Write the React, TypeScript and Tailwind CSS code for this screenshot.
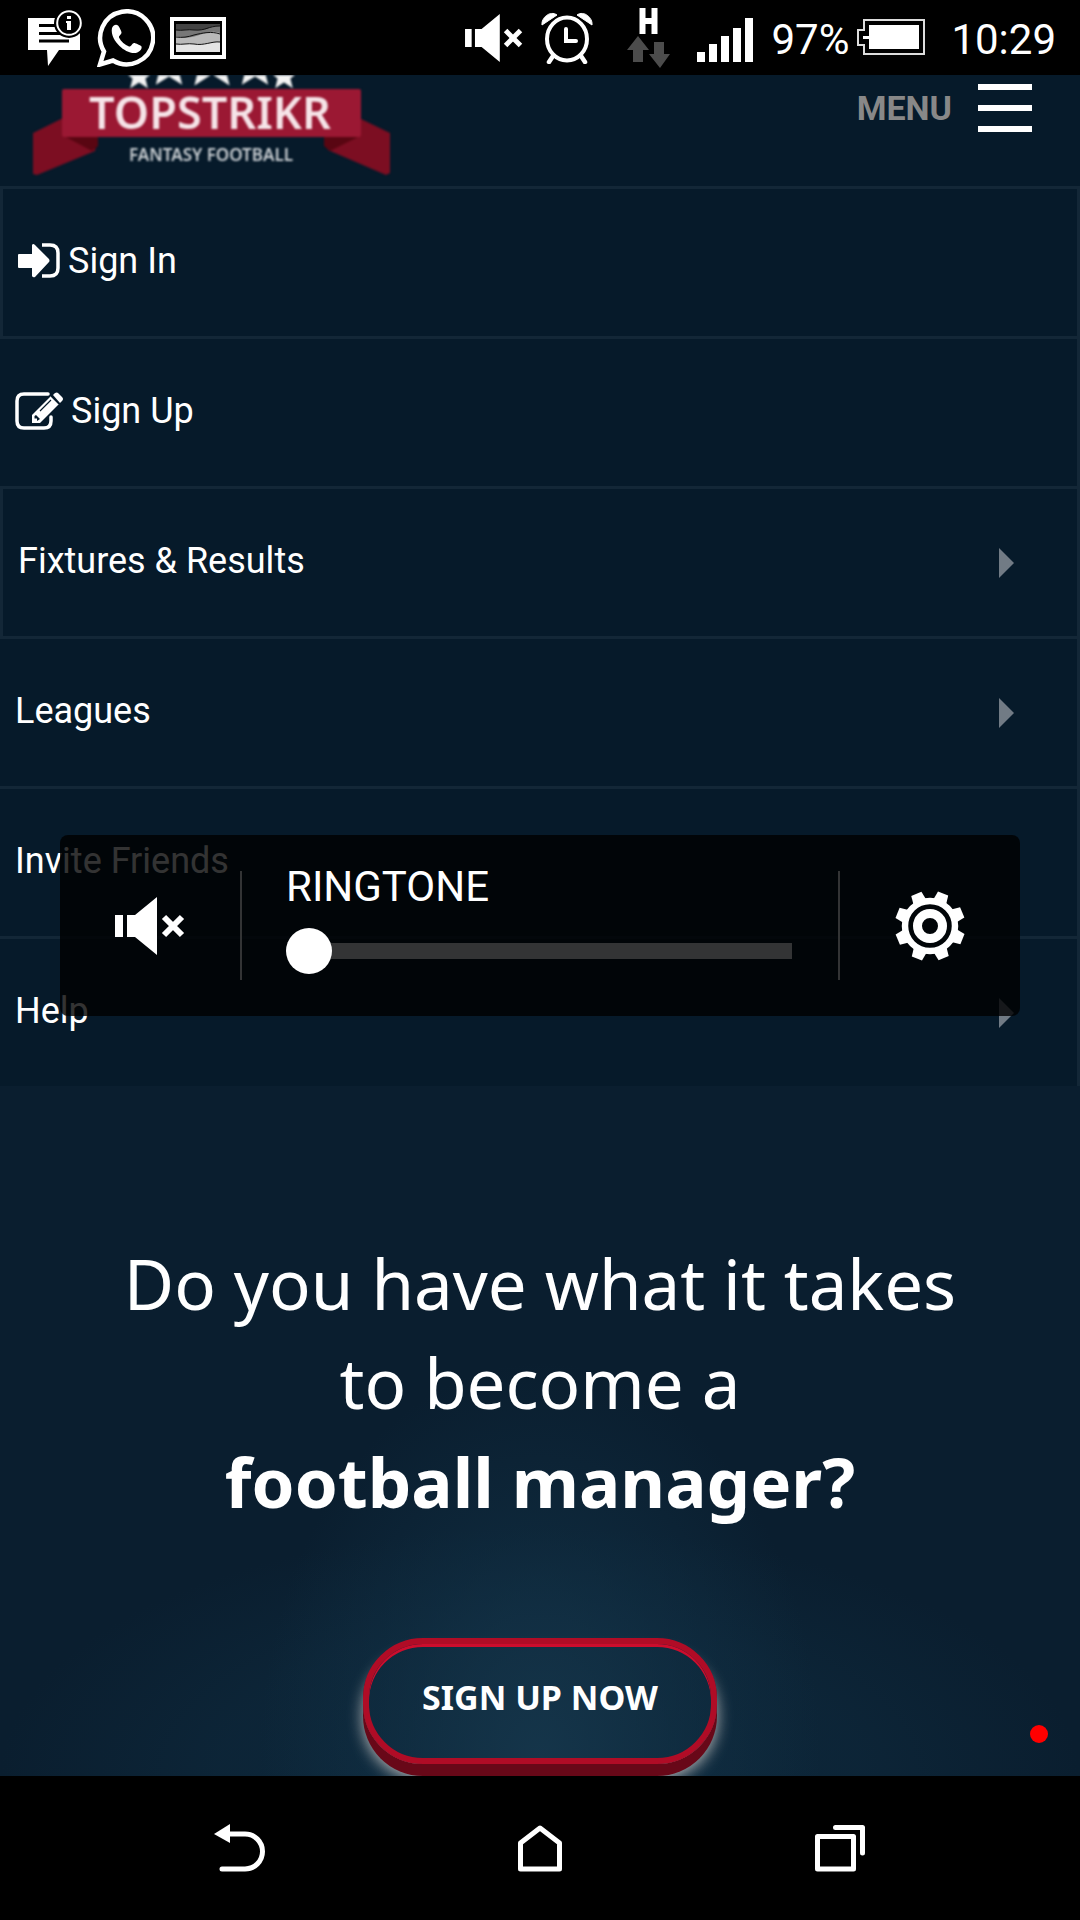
import React, { useState } from "react";

function MuteIcon({ className }: { className?: string }) {
  return (
    <svg viewBox="0 0 70 58" className={className} fill="currentColor" aria-hidden="true">
      <path d="M0 18h8v22H0zM12 18h8L42 0v58L20 40h-8z" />
      <path d="M49 20 67 38M67 20 49 38" stroke="currentColor" strokeWidth="6" fill="none" />
    </svg>
  );
}

function MessageIcon() {
  return (
    <svg viewBox="0 0 54 56" className="h-14 w-[54px]" aria-hidden="true">
      <path d="M0 8h52v32H31L20 56l-1-16H0z" fill="#fff" />
      <path d="M11 16h28M11 24h30M11 31.500h30" stroke="#000" strokeWidth="3" transform="translate(0 -.5)" />
      <circle cx="41" cy="13" r="15" fill="#000" />
      <circle cx="41" cy="13" r="11.800" fill="#000" stroke="#fff" strokeWidth="2" />
      <path d="M39 6h4v3h-4zM38 11h5v9h-4v-7h-1z" fill="#fff" />
    </svg>
  );
}

function ChatIcon() {
  return (
    <svg viewBox="0 0 58 58" className="h-[58px] w-[58px]" fill="none" aria-hidden="true">
      <path
        d="M3 55.500 7 42.500A26.500 26.500 0 1 1 16 51.500z"
        stroke="#fff"
        strokeWidth="4.500"
      />
      <path
        d="M15 19c1.500-3 4-4 6-2.500 1 .8 3.500 6 3.500 7 0 2-3 3.500-2.500 5 2 4 6 7.500 10 9 2 .5 3.500-3.500 5-3.500s7 2.500 7.500 3.500c1 3-3 6-6 6.500-5 .8-12-3-16-7-4-4-9-11-7.500-18z"
        fill="#fff"
      />
    </svg>
  );
}

function PictureIcon() {
  return (
    <svg viewBox="0 0 56 42" className="h-[42px] w-14" aria-hidden="true">
      <path d="M2 2h52v38H2z" fill="#000" stroke="#fff" strokeWidth="4" />
      <path d="M6 7h44v28H6z" fill="#e4e4e4" />
      <path d="M6 7h44v18c-8-1-16 4-26 2-6-1-12 1-18 0z" fill="#b9b9b9" />
      <path d="M6 7h44v9c-10-4-20 3-28 4-6 1-10 1-16-1z" fill="#777" />
      <path d="M6 7h44v2c-12-1-10 5-26 4-8-1-12 1-18 0z" fill="#444" />
      <path
        d="M6 27c6 1 12-1 18 0 10 2 18-3 26-2M6 20c6 1 12 0 18-2 8-2 18-4 26-1M6 13c6 1 12-1 18 0 12 1 14-4 26-4"
        stroke="#111"
        fill="none"
      />
    </svg>
  );
}

function AlarmIcon() {
  return (
    <svg viewBox="0 0 52 52" className="h-[52px] w-[52px]" fill="none" stroke="#fff" aria-hidden="true">
      <ellipse cx="26" cy="27" rx="20" ry="21.500" strokeWidth="4" />
      <path d="M25 17v12h10" strokeWidth="4" strokeLinecap="round" />
      <path d="m12 44-4 6M40 44l4 6" strokeWidth="4.500" strokeLinecap="round" />
      <path d="M1 13C0 6 9-2 16 3zM51 13C52 6 43-2 36 3z" fill="#fff" strokeWidth="1" />
    </svg>
  );
}

function DataIcon() {
  return (
    <svg viewBox="0 0 44 60" className="h-15 w-11" aria-hidden="true">
      <path d="M15.500 0v26M27.500 0v26M15 13h13" stroke="#fff" strokeWidth="6" />
      <path d="M11 28 22 42h-6v12H6V42H0zM27 34h10v12h6L33 60 22 46h5z" fill="#4c4c4c" />
    </svg>
  );
}

function SignalIcon() {
  return (
    <svg viewBox="0 0 56 44" className="h-11 w-14" fill="#fff" aria-hidden="true">
      <path d="M0 34h8v10H0zM12 26h8v18h-8zM24 18h8v26h-8zM36 10h8v34h-8zM48 0h8v44h-8z" />
    </svg>
  );
}

function BatteryIcon() {
  return (
    <svg viewBox="0 0 68 37" className="h-[37px] w-17" aria-hidden="true">
      <path d="M7 1h60v34H7v-9H1V11h6z" fill="none" stroke="#ddd" strokeWidth="2" />
      <path d="M12 6h50v24H12V20H6v-3h6z" fill="#fff" />
    </svg>
  );
}

function StatusBar() {
  return (
    <header className="flex h-[75px] items-center justify-between bg-black pl-7 pr-6 text-[42px] leading-none text-white">
      <div className="flex items-center gap-[15px]">
        <MessageIcon />
        <ChatIcon />
        <PictureIcon />
      </div>
      <div className="flex items-center gap-[18px]">
        <MuteIcon className="h-12 w-[58px]" />
        <AlarmIcon />
        <div className="pl-4 pr-2">
          <DataIcon />
        </div>
        <div className="pt-1">
          <SignalIcon />
        </div>
        <div className="flex items-center gap-2">
          <span className="pt-1">97%</span>
          <BatteryIcon />
        </div>
        <span className="pl-2 pt-1">10:29</span>
      </div>
    </header>
  );
}

const star = "0,-18 5,-6 18,-6 8,2 11,14 0,7 -11,14 -8,2 -18,-6 -5,-6";

function Logo() {
  return (
    <svg viewBox="0 0 364 104" className="h-[104px] w-[364px] blur-[1px]" role="img" aria-label="Topstrikr Fantasy Football">
      <g fill="#f3f3f3">
        <polygon points={star} transform="translate(109 2) scale(.8)" />
        <polygon points={star} transform="translate(139 -7) scale(1.200)" />
        <polygon points={star} transform="translate(182 -12) scale(1.600)" />
        <polygon points={star} transform="translate(225 -7) scale(1.200)" />
        <polygon points={star} transform="translate(254 2) scale(.8)" />
      </g>
      <path d="M33 43 3 58v41l4 1 58-24 3-16zM329 43l31 15v40l-4 2-58-25-4-15z" fill="#7c0e22" />
      <path d="M34 61h34v10l-6 5zM330 61h-36v10l6 5z" fill="#590612" />
      <rect x="32" y="14" width="299" height="48" rx="2" fill="#9b1833" />
      <text x="180" y="54" textAnchor="middle" fontFamily="'Noto Sans', sans-serif" fontWeight="600" fontSize="45" fill="#f6e4e8">
        TOPSTRIKR
      </text>
      <text x="181" y="86" textAnchor="middle" fontFamily="'Noto Sans', sans-serif" fontWeight="600" fontSize="17" fill="#c9ced2">
        FANTASY FOOTBALL
      </text>
    </svg>
  );
}

function SignInIcon() {
  return (
    <svg viewBox="0 0 42 36" className="h-9 w-[42px]" aria-hidden="true">
      <path d="M1 11h13V2q1-2 3 0l14 14q1 2 0 3L17 34q-2 1-3-1v-8H1q-1 0-1-1V12q0-1 1-1z" fill="#fff" />
      <path d="M24 2h8q8 0 8 8v15q0 8-8 8h-8" stroke="#fff" strokeWidth="3.500" fill="none" />
    </svg>
  );
}

function SignUpIcon() {
  return (
    <svg viewBox="0 0 48 38" className="h-[38px] w-12" aria-hidden="true">
      <path d="M33 2H9Q2 2 2 9v20q0 7 7 7h20q7 0 7-7v-4" stroke="#fff" strokeWidth="3.500" fill="none" strokeLinecap="round" />
      <path d="M17 23 36 4l8 8-19 19h-8zM38 3l2-2q2-1 3 0l4 4q2 2 0 4l-2 2z" fill="#fff" />
      <path d="m25 19 11-11M36 4l8 8" stroke="#061a2a" strokeWidth="1.200" />
      <path d="M19.500 24v2.500H22V29l3-2-4-4z" fill="#061a2a" />
    </svg>
  );
}

type Item = { label: string; icon?: React.ReactNode; boxed?: boolean; expands?: boolean };

const items: Item[] = [
  { label: "Sign In", icon: <SignInIcon />, boxed: true },
  { label: "Sign Up", icon: <SignUpIcon /> },
  { label: "Fixtures & Results", boxed: true, expands: true },
  { label: "Leagues", expands: true },
  { label: "Invite Friends" },
  { label: "Help", expands: true },
];

function Menu() {
  return (
    <nav aria-label="Main">
      <ul>
        {items.map((item) => (
          <li
            key={item.label}
            className={
              item.boxed
                ? "border-l-[3px] border-r-[3px] border-t-[3px] border-[#132737]"
                : "border-r-[3px] border-t-[3px] border-[#132737]"
            }
          >
            <a href="#" className="flex h-[147px] items-center justify-between pl-[15px] pr-[62px] text-[36px] text-white">
              <span className="flex items-center gap-2 pb-1">
                {item.icon}
                {item.label}
              </span>
              {item.expands && (
                <svg viewBox="0 0 16 30" className="h-[30px] w-4" aria-hidden="true">
                  <path d="M0 0 15 15 0 30z" fill="#717b85" />
                </svg>
              )}
            </a>
          </li>
        ))}
      </ul>
    </nav>
  );
}

const teeth = [22, 67, 112, 157, 202, 247, 292, 337];

function GearIcon() {
  return (
    <svg viewBox="-35 -35 70 70" className="h-[70px] w-[70px]" aria-hidden="true">
      {teeth.map((angle) => (
        <path key={angle} d="M-7-25-5.500-35H5.500L7-25z" fill="#fff" transform={`rotate(${angle})`} />
      ))}
      <circle r="25" fill="none" stroke="#fff" strokeWidth="6.500" />
      <circle r="12.500" fill="none" stroke="#fff" strokeWidth="9" />
    </svg>
  );
}

function VolumePanel() {
  const [volume, setVolume] = useState(0);
  return (
    <section
      aria-label="Volume"
      className="absolute inset-x-[60px] top-[835px] flex h-[181px] items-center rounded-lg bg-black/80 text-white"
    >
      <button aria-label="Mute" className="flex w-[180px] justify-center">
        <MuteIcon className="h-[58px] w-[70px]" />
      </button>
      <div className="flex h-[109px] flex-1 flex-col border-x-2 border-[#333435] pl-11 pr-[46px]">
        <label htmlFor="ringtone" className="text-[42px] leading-8">
          RINGTONE
        </label>
        <input
          id="ringtone"
          type="range"
          min={0}
          max={15}
          value={volume}
          onChange={(e) => setVolume(Number(e.target.value))}
          className="mt-[25px] h-[46px] w-full appearance-none bg-transparent [&::-webkit-slider-runnable-track]:h-4 [&::-webkit-slider-runnable-track]:bg-[linear-gradient(to_right,transparent_23px,#333435_23px)] [&::-webkit-slider-thumb]:-mt-[15px] [&::-webkit-slider-thumb]:h-[46px] [&::-webkit-slider-thumb]:w-[46px] [&::-webkit-slider-thumb]:appearance-none [&::-webkit-slider-thumb]:rounded-full [&::-webkit-slider-thumb]:bg-white"
        />
      </div>
      <button aria-label="Sound settings" className="flex w-[180px] justify-center">
        <GearIcon />
      </button>
    </section>
  );
}

function Hero() {
  return (
    <main className="relative flex flex-1 flex-col items-center overflow-hidden bg-[#0a1e2f] bg-[radial-gradient(ellipse_26%_58%_at_50%_98%,#15354a_0%,#12324777_55%,transparent_100%),radial-gradient(ellipse_50%_36%_at_50%_100%,#0f2e4299_0%,#0f2c4077_60%,transparent_100%)] px-6 pb-3 pt-[148px] font-['Noto_Sans',sans-serif] text-white">
      <h1 className="text-center text-[69px] leading-[99px]">
        Do you have what it takes
        <br />
        to become a
        <br />
        <strong className="font-bold">football manager?</strong>
      </h1>
      <button className="mt-[107px] h-[126px] w-[354px] rounded-[60px] border-[6px] border-[#b00c26] pb-2 text-[34px] font-bold shadow-[inset_0_3px_0_#cc0d2d,0_12px_0_#680818,0_15px_15px_#b4b4b4]">
        SIGN UP NOW
      </button>
      <span className="absolute bottom-[33px] right-8 h-[18px] w-[18px] rounded-full bg-[#ff0000]" />
    </main>
  );
}

function NavigationBar() {
  return (
    <footer className="grid h-36 grid-cols-3 items-center justify-items-center bg-black px-[90px]">
      <button aria-label="Back">
        <svg viewBox="0 0 52 48" className="h-12 w-[52px]" aria-hidden="true">
          <path d="M0 10 16 0v19z" fill="#fff" />
          <path d="M14 10h17a17.500 17.500 0 0 1 0 35H8" stroke="#fff" strokeWidth="5" fill="none" strokeLinecap="round" />
        </svg>
      </button>
      <button aria-label="Home">
        <svg viewBox="0 0 44 48" className="h-12 w-11" fill="none" stroke="#fff" strokeWidth="5" strokeLinejoin="round" aria-hidden="true">
          <path d="M2.500 45V19L22 4l19.500 15v26z" />
        </svg>
      </button>
      <button aria-label="Recent apps">
        <svg viewBox="0 0 50 48" className="h-12 w-[50px]" fill="none" stroke="#fff" strokeWidth="5" strokeLinejoin="round" strokeLinecap="round" aria-hidden="true">
          <path d="M2.500 12.500h36V45h-36zM20.500 3.500h27V29" />
        </svg>
      </button>
    </footer>
  );
}

export default function App() {
  return (
    <div className="relative flex min-h-screen flex-col bg-[#061a2a] font-[Roboto,sans-serif]">
      <StatusBar />
      <div className="flex h-[111px] items-start justify-between overflow-hidden pl-[30px] pr-12">
        <a href="#">
          <Logo />
        </a>
        <button className="flex items-center gap-[26px] pt-[9px] text-[34px] font-bold leading-[48px] text-[#888]">
          MENU
          <span className="flex w-[54px] flex-col gap-[15px]">
            <span className="h-1.5 bg-white" />
            <span className="h-1.5 bg-white" />
            <span className="h-1.5 bg-white" />
          </span>
        </button>
      </div>
      <Menu />
      <Hero />
      <NavigationBar />
      <VolumePanel />
    </div>
  );
}
